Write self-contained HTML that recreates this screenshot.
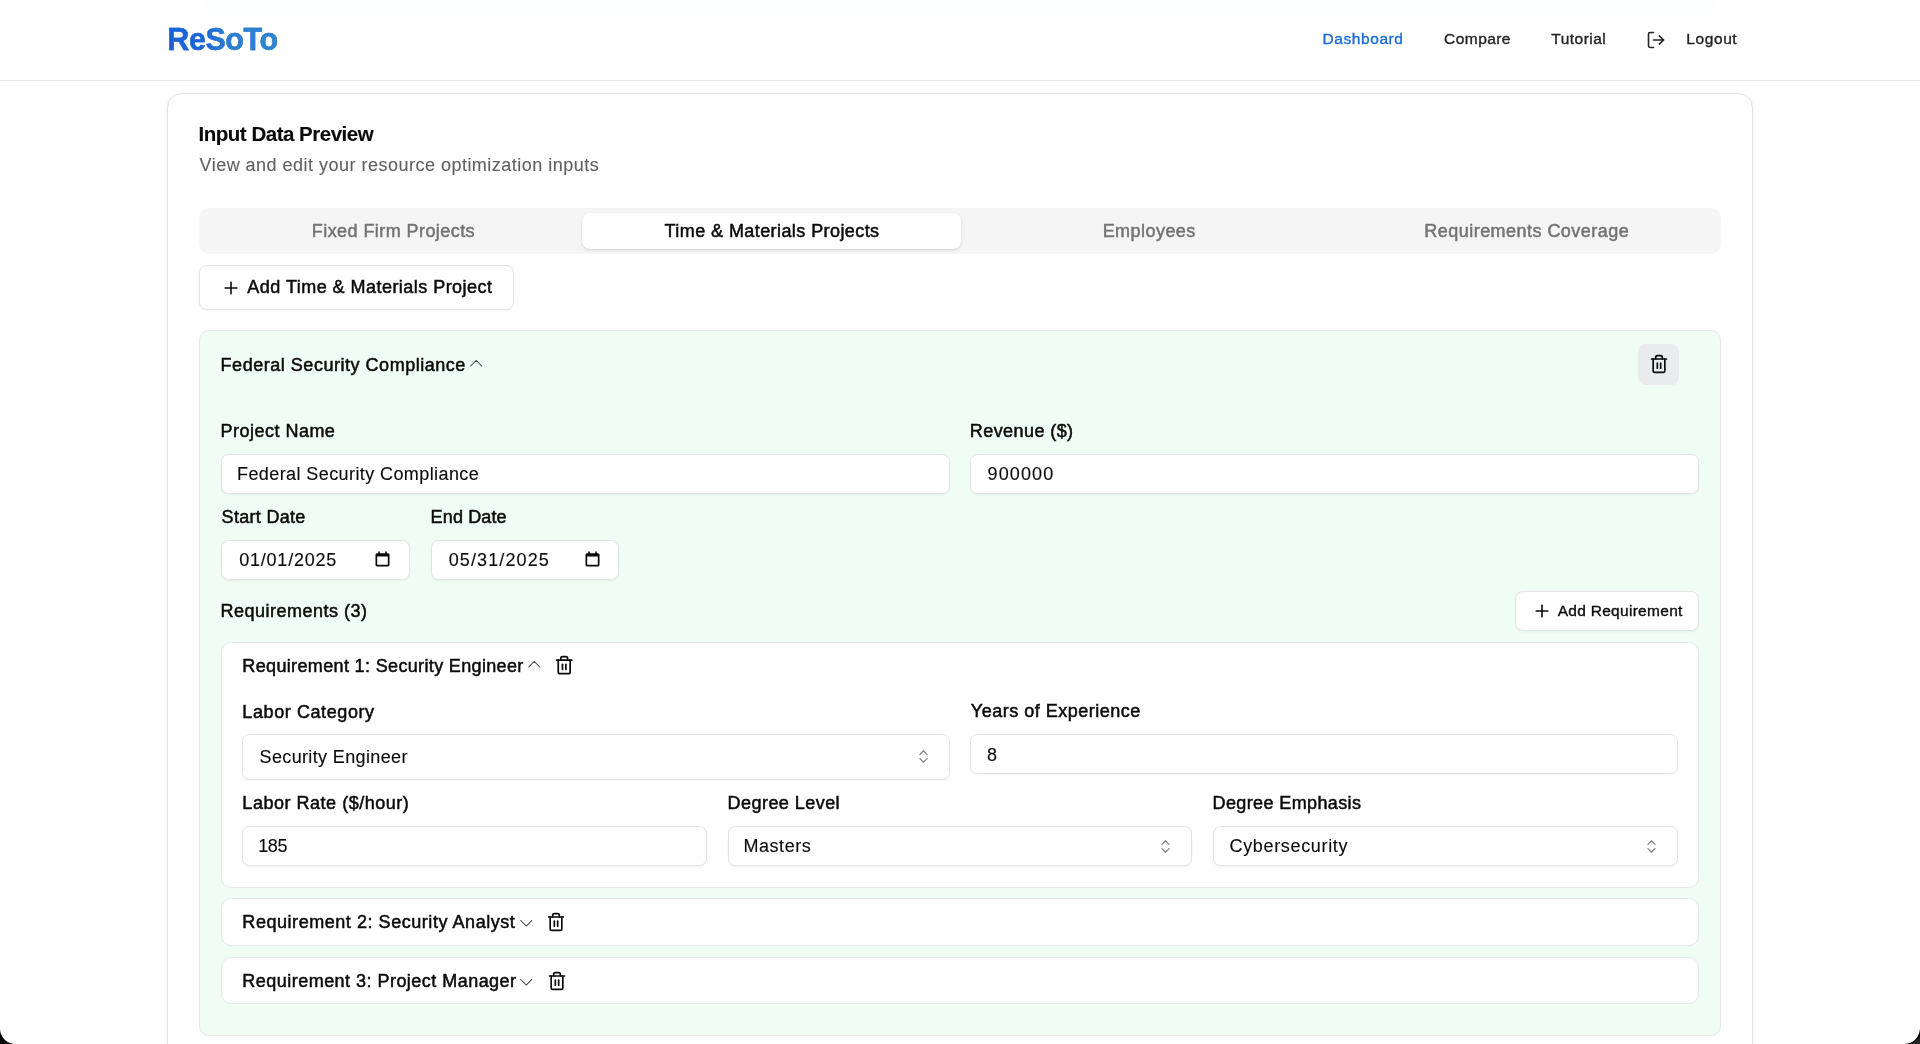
<!DOCTYPE html><html lang="en"><head><meta charset="utf-8"><title>ReSoTo - Input Data Preview</title><style>
*{box-sizing:border-box;margin:0;padding:0}
html,body{width:1920px;height:1044px;overflow:hidden;background:#fff}
main,header{will-change:transform}
body{position:relative;font-family:"Liberation Sans",Arial,sans-serif;color:#0a0a0a}
.abs,.tx,.ic,.card,.panel,.field,.btn,.tabs,.tab-on,.req,.hdr,.corner,.icbtn{position:absolute}
.tx{white-space:nowrap;line-height:1;display:block;text-decoration:none;font-weight:400;font-family:inherit;padding:0}
.tx{-webkit-text-stroke:0.12px currentColor}
.md{-webkit-text-stroke:0.5px currentColor}
.sm{-webkit-text-stroke:0.35px currentColor}
.logo{background:linear-gradient(90deg,#1a60dc 0%,#1c65d9 32%,#2a81ce 56%,#2d87cb 100%);-webkit-text-stroke:0.4px #2270d4 !important;-webkit-background-clip:text;background-clip:text;color:transparent !important}
.hdr{left:0;top:0;width:1920px;height:81px;background:rgba(255,255,255,.8);border-bottom:1px solid #e5e7eb}
.ghost{position:absolute;left:199px;top:-8px;width:1522px;height:26px;background:#f0fdf4;border-radius:0 0 10px 10px;filter:blur(3px);opacity:.7}
.card{background:#fff;border:1px solid #e0e2e7;border-radius:15px;box-shadow:0 1px 3px rgba(0,0,0,.08),0 1px 2px -1px rgba(0,0,0,.08)}
.tabs{background:#f5f5f5;border-radius:10px}
.tab-on{background:#fff;border-radius:8px;box-shadow:0 1px 3px rgba(0,0,0,.12),0 1px 2px -1px rgba(0,0,0,.1)}
.btn{background:#fff;border:1px solid #e2e4e8;border-radius:8px;box-shadow:0 1px 2px rgba(0,0,0,.05)}
.panel{background:#f0fdf4;border:1px solid #e4e6e9;border-radius:10px}
.icbtn{background:#eaebed;border-radius:8px}
.field{background:#fff;border:1px solid #e1e2e7;border-radius:7.5px;box-shadow:0 1px 2px rgba(0,0,0,.05)}
.req{background:#fff;border:1px solid #e4e6e9;border-radius:10px}
.corner{bottom:0;width:16px;height:16px;overflow:hidden}
.corner i{position:absolute;width:31px;height:31px;border-radius:15.5px;box-shadow:0 0 0 1.5px #000,0 0 0 20px #242426}
</style></head><body>
<div class="ghost"></div>
<header class="hdr">
<a class="tx logo" style="left:167.3px;top:24.18px;font-size:30.5px;letter-spacing:-0.426px;color:#1d6ad6;font-weight:700;">ReSoTo</a>
<nav><a class="tx md sm" style="left:1322.6px;top:31.13px;font-size:15.5px;letter-spacing:0.568px;color:#1a6bd6;">Dashboard</a><a class="tx md sm" style="left:1444.1px;top:31.13px;font-size:15.5px;letter-spacing:0.437px;color:#222;">Compare</a><a class="tx md sm" style="left:1551.35px;top:31.13px;font-size:15.5px;letter-spacing:0.476px;color:#222;">Tutorial</a><svg class="ic" style="left:1646.00px;top:29.65px;opacity:1" width="20" height="20" viewBox="0 0 24 24" fill="none" stroke="#222" stroke-width="1.9" stroke-linecap="round" stroke-linejoin="round"><path d="M9 21H5a2 2 0 0 1-2-2V5a2 2 0 0 1 2-2h4"/><path d="m16 17 5-5-5-5"/><path d="M21 12H9"/></svg><a class="tx md sm" style="left:1686.35px;top:31.13px;font-size:15.5px;letter-spacing:0.58px;color:#222;">Logout</a></nav>
</header>
<main>
<div class="card" style="left:167px;top:93px;width:1586px;height:1000px;"></div>
<h2 class="tx" style="left:198.5px;top:124.05px;font-size:20.5px;letter-spacing:-0.483px;color:#0a0a0a;font-weight:700;">Input Data Preview</h2>
<p class="tx" style="left:199.5px;top:156.16px;font-size:18px;letter-spacing:0.486px;color:#616161;">View and edit your resource optimization inputs</p>
<div class="tabs" style="left:199px;top:208px;width:1522px;height:46px;"></div>
<div class="tab-on" style="left:582px;top:213px;width:379px;height:36px;"></div>
<button class="tx md" style="left:311.85px;top:222.26px;font-size:18px;letter-spacing:0.429px;color:#737373;border:0;background:none;">Fixed Firm Projects</button><button class="tx md" style="left:664.6px;top:222.26px;font-size:18px;letter-spacing:0.422px;color:#0a0a0a;border:0;background:none;">Time &amp; Materials Projects</button><button class="tx md" style="left:1102.65px;top:222.26px;font-size:18px;letter-spacing:0.457px;color:#737373;border:0;background:none;">Employees</button><button class="tx md" style="left:1424.35px;top:222.26px;font-size:18px;letter-spacing:0.461px;color:#737373;border:0;background:none;">Requirements Coverage</button>
<div class="btn" style="left:199px;top:265px;width:315px;height:45px;"></div>
<svg class="ic" style="left:221.00px;top:277.50px;opacity:1" width="20" height="20" viewBox="0 0 24 24" fill="none" stroke="#0a0a0a" stroke-width="1.9" stroke-linecap="round" stroke-linejoin="round"><path d="M5 12h14"/><path d="M12 5v14"/></svg>
<span class="tx md" style="left:247.35px;top:277.96px;font-size:18px;letter-spacing:0.466px;color:#0a0a0a;">Add Time &amp; Materials Project</span>
<div class="panel" style="left:199px;top:330px;width:1522px;height:706px;"></div>
<h3 class="tx md" style="left:220.6px;top:355.51px;font-size:18px;letter-spacing:0.525px;color:#0a0a0a;">Federal Security Compliance</h3>
<svg class="ic" style="left:464.50px;top:352.15px;opacity:1" width="22.5" height="22.5" viewBox="0 0 24 24" fill="none" stroke="#505050" stroke-width="1.1" stroke-linecap="round" stroke-linejoin="round"><path d="m18 15-6-6-6 6"/></svg>
<div class="icbtn" style="left:1638px;top:344px;width:41px;height:41px;"></div>
<svg class="ic" style="left:1648.60px;top:354.40px;opacity:1" width="20" height="20" viewBox="0 0 24 24" fill="none" stroke="#0a0a0a" stroke-width="2" stroke-linecap="round" stroke-linejoin="round"><path d="M3 6h18"/><path d="M19 6v14c0 1-1 2-2 2H7c-1 0-2-1-2-2V6"/><path d="M8 6V4c0-1 1-2 2-2h4c1 0 2 1 2 2v2"/><path d="M10 11v6"/><path d="M14 11v6"/></svg>
<label class="tx md" style="left:220.6px;top:421.76px;font-size:18px;letter-spacing:0.475px;color:#0a0a0a;">Project Name</label><div class="field" style="left:221px;top:454px;width:729px;height:40px;"></div><span class="tx" style="left:237px;top:464.76px;font-size:18px;letter-spacing:0.41px;color:#0a0a0a;">Federal Security Compliance</span>
<label class="tx md" style="left:969.85px;top:421.76px;font-size:18px;letter-spacing:0.419px;color:#0a0a0a;">Revenue ($)</label><div class="field" style="left:970px;top:454px;width:729px;height:40px;"></div><span class="tx" style="left:987.5px;top:464.76px;font-size:18px;letter-spacing:1.139px;color:#0a0a0a;">900000</span>
<label class="tx md" style="left:221.6px;top:507.86px;font-size:18px;letter-spacing:0.303px;color:#0a0a0a;">Start Date</label><div class="field" style="left:221px;top:540px;width:189px;height:40px;"></div><span class="tx" style="left:239.25px;top:550.86px;font-size:18px;letter-spacing:0.769px;color:#0a0a0a;">01/01/2025</span><svg class="ic" style="left:374.5px;top:551px" width="15" height="16" viewBox="0 0 15 16"><path fill="#0a0a0a" d="M3.2 0.6h1.6v1.6h5.4V0.6h1.6v1.6h1.1c.9 0 1.6.7 1.6 1.6v10c0 .9-.7 1.6-1.6 1.6H2.1c-.9 0-1.6-.7-1.6-1.6v-10c0-.9.7-1.6 1.6-1.6h1.1z M2.2 5.6v8.1h10.6V5.6z"/></svg>
<label class="tx md" style="left:430.6px;top:507.86px;font-size:18px;letter-spacing:0.137px;color:#0a0a0a;">End Date</label><div class="field" style="left:431px;top:540px;width:188px;height:40px;"></div><span class="tx" style="left:448.75px;top:550.86px;font-size:18px;letter-spacing:1.103px;color:#0a0a0a;">05/31/2025</span><svg class="ic" style="left:584.5px;top:551px" width="15" height="16" viewBox="0 0 15 16"><path fill="#0a0a0a" d="M3.2 0.6h1.6v1.6h5.4V0.6h1.6v1.6h1.1c.9 0 1.6.7 1.6 1.6v10c0 .9-.7 1.6-1.6 1.6H2.1c-.9 0-1.6-.7-1.6-1.6v-10c0-.9.7-1.6 1.6-1.6h1.1z M2.2 5.6v8.1h10.6V5.6z"/></svg>
<h4 class="tx md" style="left:220.6px;top:601.76px;font-size:18px;letter-spacing:0.496px;color:#0a0a0a;">Requirements (3)</h4>
<div class="btn" style="left:1515px;top:591px;width:184px;height:40px;"></div><svg class="ic" style="left:1531.60px;top:601.00px;opacity:1" width="20" height="20" viewBox="0 0 24 24" fill="none" stroke="#0a0a0a" stroke-width="1.9" stroke-linecap="round" stroke-linejoin="round"><path d="M5 12h14"/><path d="M12 5v14"/></svg><span class="tx md sm" style="left:1557.65px;top:603.08px;font-size:15.5px;letter-spacing:0.292px;color:#0a0a0a;">Add Requirement</span>
<div class="req" style="left:221px;top:642px;width:1478px;height:246px;"></div>
<span class="tx md" style="left:242.35px;top:657.01px;font-size:18px;letter-spacing:0.35px;color:#0a0a0a;">Requirement 1: Security Engineer</span><svg class="ic" style="left:522.75px;top:653.35px;opacity:1" width="22.5" height="22.5" viewBox="0 0 24 24" fill="none" stroke="#505050" stroke-width="1.1" stroke-linecap="round" stroke-linejoin="round"><path d="m18 15-6-6-6 6"/></svg><svg class="ic" style="left:554.15px;top:655.20px;opacity:1" width="20.4" height="20.4" viewBox="0 0 24 24" fill="none" stroke="#0a0a0a" stroke-width="2" stroke-linecap="round" stroke-linejoin="round"><path d="M3 6h18"/><path d="M19 6v14c0 1-1 2-2 2H7c-1 0-2-1-2-2V6"/><path d="M8 6V4c0-1 1-2 2-2h4c1 0 2 1 2 2v2"/><path d="M10 11v6"/><path d="M14 11v6"/></svg>
<label class="tx md" style="left:242.35px;top:702.51px;font-size:18px;letter-spacing:0.59px;color:#0a0a0a;">Labor Category</label><div class="field" style="left:242px;top:734px;width:708px;height:46px;"></div><span class="tx" style="left:259.5px;top:748.26px;font-size:18px;letter-spacing:0.37px;color:#0a0a0a;">Security Engineer</span><svg class="ic" style="left:914.60px;top:748.40px;opacity:0.5" width="17" height="17" viewBox="0 0 24 24" fill="none" stroke="#0a0a0a" stroke-width="1.85" stroke-linecap="round" stroke-linejoin="round"><path d="m7 15 5 5 5-5"/><path d="m7 9 5-5 5 5"/></svg>
<label class="tx md" style="left:970.85px;top:702.26px;font-size:18px;letter-spacing:0.504px;color:#0a0a0a;">Years of Experience</label><div class="field" style="left:970px;top:734px;width:708px;height:40px;"></div><span class="tx" style="left:987px;top:745.51px;font-size:18px;letter-spacing:0px;color:#0a0a0a;">8</span>
<label class="tx md" style="left:242.35px;top:794.01px;font-size:18px;letter-spacing:0.523px;color:#0a0a0a;">Labor Rate ($/hour)</label><div class="field" style="left:242px;top:826px;width:465px;height:40px;"></div><span class="tx" style="left:258.25px;top:837.01px;font-size:18px;letter-spacing:-0.386px;color:#0a0a0a;">185</span>
<label class="tx md" style="left:727.6px;top:794.26px;font-size:18px;letter-spacing:0.448px;color:#0a0a0a;">Degree Level</label><div class="field" style="left:728px;top:826px;width:464px;height:40px;"></div><span class="tx" style="left:743.5px;top:837.26px;font-size:18px;letter-spacing:0.54px;color:#0a0a0a;">Masters</span><svg class="ic" style="left:1157.10px;top:837.50px;opacity:0.5" width="17" height="17" viewBox="0 0 24 24" fill="none" stroke="#0a0a0a" stroke-width="1.85" stroke-linecap="round" stroke-linejoin="round"><path d="m7 15 5 5 5-5"/><path d="m7 9 5-5 5 5"/></svg>
<label class="tx md" style="left:1212.6px;top:794.26px;font-size:18px;letter-spacing:0.374px;color:#0a0a0a;">Degree Emphasis</label><div class="field" style="left:1213px;top:826px;width:465px;height:40px;"></div><span class="tx" style="left:1229.5px;top:837.26px;font-size:18px;letter-spacing:0.664px;color:#0a0a0a;">Cybersecurity</span><svg class="ic" style="left:1642.50px;top:837.50px;opacity:0.5" width="17" height="17" viewBox="0 0 24 24" fill="none" stroke="#0a0a0a" stroke-width="1.85" stroke-linecap="round" stroke-linejoin="round"><path d="m7 15 5 5 5-5"/><path d="m7 9 5-5 5 5"/></svg>
<div class="req" style="left:221px;top:898px;width:1478px;height:48px;"></div><span class="tx md" style="left:242.35px;top:913.26px;font-size:18px;letter-spacing:0.546px;color:#0a0a0a;">Requirement 2: Security Analyst</span><svg class="ic" style="left:514.75px;top:912.35px;opacity:1" width="22.5" height="22.5" viewBox="0 0 24 24" fill="none" stroke="#505050" stroke-width="1.1" stroke-linecap="round" stroke-linejoin="round"><path d="m6 9 6 6 6-6"/></svg><svg class="ic" style="left:546.10px;top:912.00px;opacity:1" width="20" height="20" viewBox="0 0 24 24" fill="none" stroke="#0a0a0a" stroke-width="2" stroke-linecap="round" stroke-linejoin="round"><path d="M3 6h18"/><path d="M19 6v14c0 1-1 2-2 2H7c-1 0-2-1-2-2V6"/><path d="M8 6V4c0-1 1-2 2-2h4c1 0 2 1 2 2v2"/><path d="M10 11v6"/><path d="M14 11v6"/></svg>
<div class="req" style="left:221px;top:957px;width:1478px;height:47px;"></div><span class="tx md" style="left:242.35px;top:971.51px;font-size:18px;letter-spacing:0.469px;color:#0a0a0a;">Requirement 3: Project Manager</span><svg class="ic" style="left:515.00px;top:970.50px;opacity:1" width="22.5" height="22.5" viewBox="0 0 24 24" fill="none" stroke="#505050" stroke-width="1.1" stroke-linecap="round" stroke-linejoin="round"><path d="m6 9 6 6 6-6"/></svg><svg class="ic" style="left:546.50px;top:970.60px;opacity:1" width="20" height="20" viewBox="0 0 24 24" fill="none" stroke="#0a0a0a" stroke-width="2" stroke-linecap="round" stroke-linejoin="round"><path d="M3 6h18"/><path d="M19 6v14c0 1-1 2-2 2H7c-1 0-2-1-2-2V6"/><path d="M8 6V4c0-1 1-2 2-2h4c1 0 2 1 2 2v2"/><path d="M10 11v6"/><path d="M14 11v6"/></svg>
</main>
<div class="corner" style="left:0"><i style="left:0;bottom:0;box-shadow:0 0 0 20px #000"></i></div>
<div class="corner" style="right:0"><i style="right:0;bottom:0"></i></div>
</body></html>
